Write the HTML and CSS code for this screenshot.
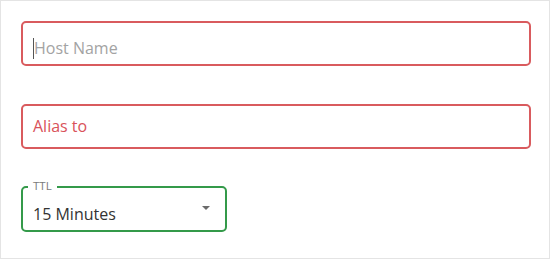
FILE: index.html
```html
<!DOCTYPE html>
<html>
<head>
<meta charset="utf-8">
<link rel="stylesheet" href="styles.css">
</head>
<body>
<div class="card">
  <div class="field field-error host">
    <span class="caret"></span>
    <span class="placeholder">Host Name</span>
  </div>
  <div class="field field-error alias">
    <span class="error-text">Alias to</span>
  </div>
  <div class="field field-ok select">
    <span class="label">TTL</span>
    <span class="value">15 Minutes</span>
    <svg class="arrow" width="8" height="4" viewBox="0 0 8 4"><path d="M0 0 L8 0 L4 4 Z" fill="#6b6b6b"/></svg>
  </div>
</div>
</body>
</html>
```

FILE: styles.css
```css
html, body {
  margin: 0;
  padding: 0;
  background: #ffffff;
}
body {
  font-family: "Open Sans", "Noto Sans", sans-serif;
}
.card {
  box-sizing: border-box;
  width: 550px;
  height: 259px;
  border: 1px solid #e4e4e4;
  padding: 20px 18px 0 20px;
  display: flex;
  flex-direction: column;
  align-items: flex-start;
}
.field {
  position: relative;
  box-sizing: border-box;
  border: 2px solid;
  border-radius: 5px;
  font-size: 16px;
  line-height: 22px;
  padding-left: 10px;
  display: flex;
  align-items: flex-start;
}
.field-error {
  border-color: #d95b5e;
}
.field-ok {
  border-color: #349a4a;
}
.host {
  width: 510px;
  height: 45px;
  padding-top: 14px;
}
.alias {
  width: 510px;
  height: 45px;
  margin-top: 38px;
  padding-top: 9px;
}
.select {
  width: 206px;
  height: 46px;
  margin-top: 37px;
  padding-top: 15px;
  padding-right: 15px;
}
.caret {
  position: absolute;
  left: 10px;
  top: 15px;
  width: 1px;
  height: 21px;
  background: #555;
}
.placeholder {
  color: #a3a3a3;
  padding-left: 1px;
}
.error-text {
  color: #d9525a;
}
.value {
  color: #333333;
  flex: 1;
}
.label {
  position: absolute;
  left: 5px;
  top: -10px;
  padding: 0 5px;
  background: #ffffff;
  font-size: 11.5px;
  line-height: 16px;
  color: #7a7a7a;
}
.arrow {
  margin-top: 3px;
}
```
